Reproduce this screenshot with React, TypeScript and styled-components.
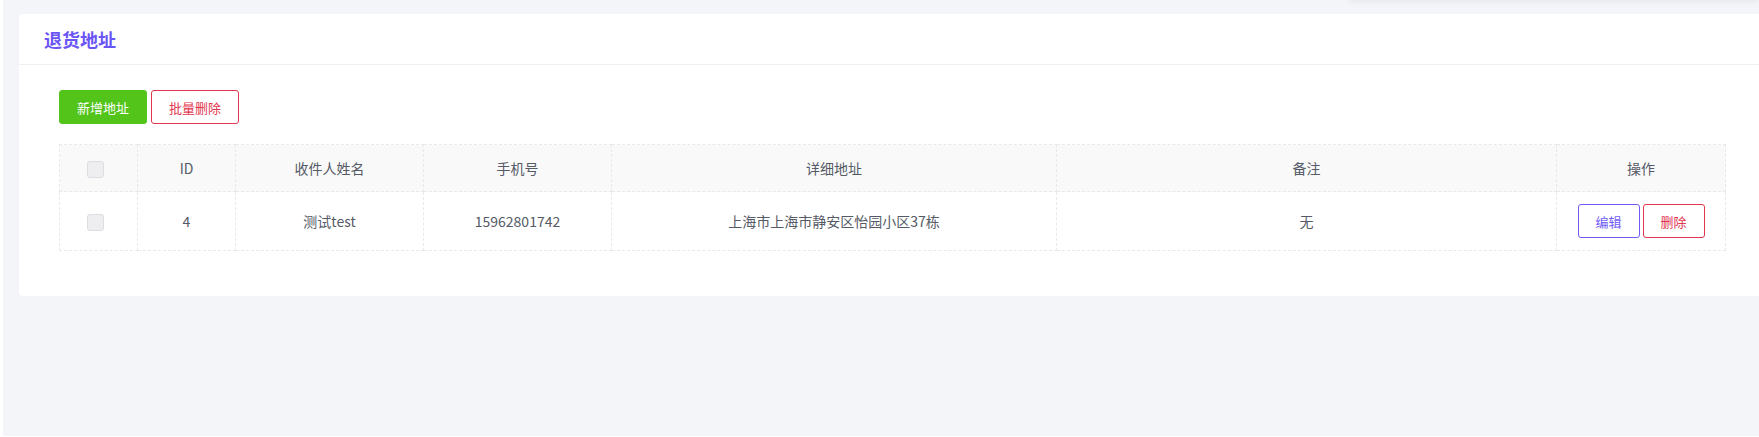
import React from "react";
import styled, { createGlobalStyle } from "styled-components";

const GlobalStyle = createGlobalStyle`
  html, body {
    margin: 0;
    padding: 0;
    background: #ffffff;
    overflow: hidden;
  }
  body {
    font-family: "Noto Sans CJK SC", "Liberation Sans", sans-serif;
    color: #515a6e;
  }
`;

const Page = styled.div`
  position: relative;
  margin-left: 3px;
  height: 436px;
  background: #f4f5f9;
  padding: 14px 0 0 16px;
  box-sizing: border-box;
  overflow: hidden;
`;

const TopShadow = styled.div`
  position: absolute;
  top: -40px;
  right: 0;
  width: 410px;
  height: 40px;
  background: #f4f5f9;
  box-shadow: 0 2px 6px rgba(0, 0, 0, 0.06);
`;

const Card = styled.div`
  background: #ffffff;
  border-radius: 4px;
  margin-right: -8px;
  height: 282px;
`;

const CardHeader = styled.div`
  height: 50px;
  display: flex;
  align-items: center;
  padding-left: 25px;
  border-bottom: 1px solid #f0f0f3;
`;

const Title = styled.h2`
  margin: 0;
  font-size: 18px;
  font-weight: 700;
  color: #6a55f5;
`;

const CardBody = styled.div`
  padding: 25px 40px 0 40px;
`;

const Toolbar = styled.div`
  display: flex;
  gap: 4px;
  margin-bottom: 20px;
`;

type Tone = "green" | "red" | "purple";

const toneColor: Record<Tone, string> = {
  green: "#52c41a",
  red: "#e3354e",
  purple: "#6f5cf6",
};

const Button = styled.button<{ $tone: Tone; $solid?: boolean; $w: number }>`
  width: ${(p) => p.$w}px;
  height: 34px;
  box-sizing: border-box;
  border-radius: 3px;
  border: 1px solid ${(p) => toneColor[p.$tone]};
  background: ${(p) => (p.$solid ? toneColor[p.$tone] : "#fff")};
  color: ${(p) => (p.$solid ? "#fff" : toneColor[p.$tone])};
  font-family: "Noto Sans CJK SC", sans-serif;
  font-size: 13px;
  padding: 0;
  cursor: pointer;
`;

const Table = styled.table`
  width: 1666px;
  table-layout: fixed;
  border-collapse: collapse;
  font-size: 14px;
  color: #555a66;
`;

const Th = styled.th<{ $check?: boolean }>`
  height: 46px;
  background: #f9f9f9;
  font-weight: 400;
  border: 1px dashed #e8e9ec;
  text-align: center;
  padding: 0 ${(p) => (p.$check ? "6px" : "0")} 0 0;
`;

const Td = styled.td<{ $check?: boolean }>`
  height: 58px;
  border: 1px dashed #e8e9ec;
  text-align: center;
  padding: 0 ${(p) => (p.$check ? "6px" : "0")} 0 0;
`;

const Check = styled.span`
  display: inline-block;
  width: 15px;
  height: 15px;
  vertical-align: middle;
  border: 1px solid #dcdde2;
  border-radius: 3px;
  background: #eeeef0;
`;

const Actions = styled.div`
  display: flex;
  justify-content: center;
  gap: 3px;
`;

const widths = [78, 98, 188, 188, 445, 500, 169];
const headers = ["ID", "收件人姓名", "手机号", "详细地址", "备注", "操作"];

const rows = [
  { id: 4, name: "测试test", phone: "15962801742", address: "上海市上海市静安区怡园小区37栋", note: "无" },
];

export default function App() {
  return (
    <>
      <GlobalStyle />
      <Page>
        <TopShadow />
        <Card>
          <CardHeader>
            <Title>退货地址</Title>
          </CardHeader>
          <CardBody>
            <Toolbar>
              <Button $tone="green" $solid $w={88}>新增地址</Button>
              <Button $tone="red" $w={88}>批量删除</Button>
            </Toolbar>
            <Table>
              <colgroup>
                {widths.map((w, i) => (
                  <col key={i} style={{ width: w }} />
                ))}
              </colgroup>
              <thead>
                <tr>
                  <Th $check>
                    <Check />
                  </Th>
                  {headers.map((h) => (
                    <Th key={h}>{h}</Th>
                  ))}
                </tr>
              </thead>
              <tbody>
                {rows.map((r) => (
                  <tr key={r.id}>
                    <Td $check>
                      <Check />
                    </Td>
                    <Td>{r.id}</Td>
                    <Td>{r.name}</Td>
                    <Td>{r.phone}</Td>
                    <Td>{r.address}</Td>
                    <Td>{r.note}</Td>
                    <Td>
                      <Actions>
                        <Button $tone="purple" $w={62}>编辑</Button>
                        <Button $tone="red" $w={62}>删除</Button>
                      </Actions>
                    </Td>
                  </tr>
                ))}
              </tbody>
            </Table>
          </CardBody>
        </Card>
      </Page>
    </>
  );
}
